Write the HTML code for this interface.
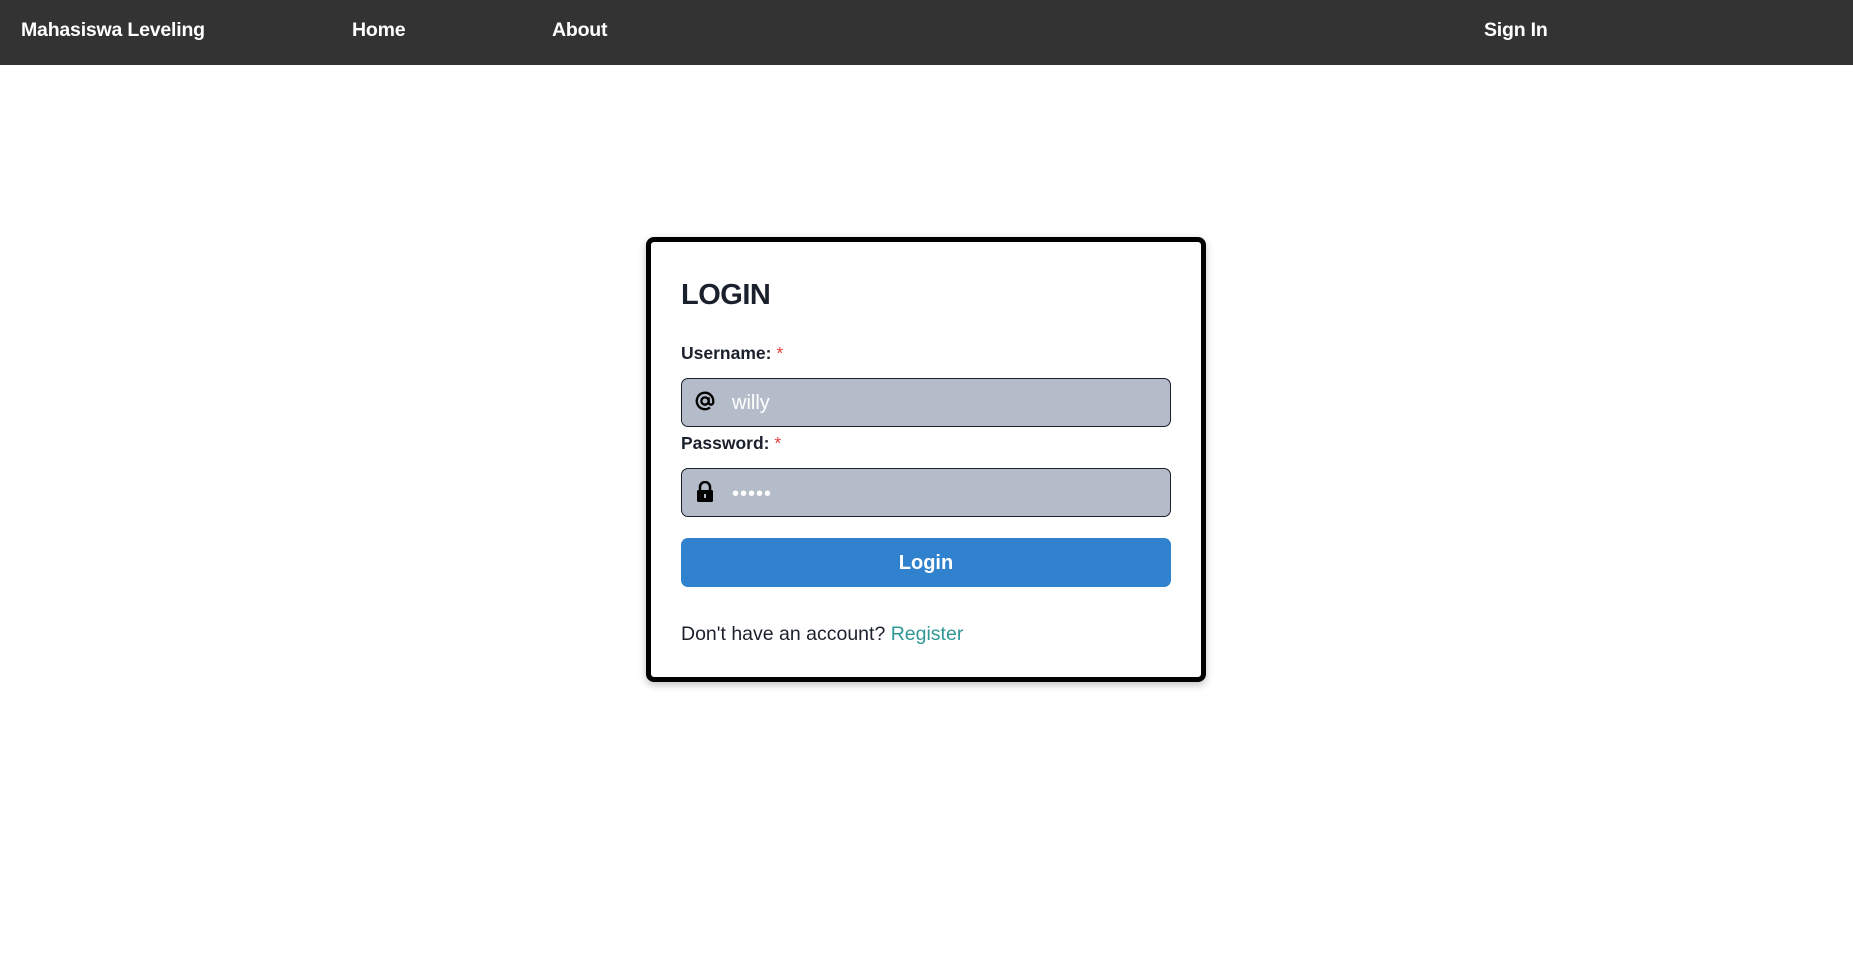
<!DOCTYPE html>
<html><head><meta charset="utf-8"><style>
*{box-sizing:border-box;margin:0;padding:0}
body{width:1853px;height:971px;background:#fff;font-family:"Liberation Sans",sans-serif;position:relative;overflow:hidden}
nav{position:absolute;left:0;top:0;width:1853px;height:65px;background:#333}
nav span{position:absolute;top:19px;color:#fff;font-weight:bold;font-size:19.5px;letter-spacing:-0.2px}
.card{position:absolute;left:646px;top:237px;width:560px;height:445px;border:5px solid #000;border-radius:8px;box-shadow:0 3px 8px rgba(0,0,0,.25)}
.t{position:absolute;left:681px;top:279px;font-size:29px;font-weight:bold;color:#1a202c;letter-spacing:-0.5px}
.lbl{position:absolute;left:681px;font-size:17.5px;font-weight:bold;color:#1a202c}
.lbl b{color:#e53e3e;font-weight:normal}
.inp{position:absolute;left:681px;width:490px;height:49px;background:#b5bcc9;border:1.5px solid #1a202c;border-radius:7px}
.inp .v{position:absolute;left:50px;top:13px;color:#fff;font-size:20px}
.btn{position:absolute;left:681px;top:538px;width:490px;height:49px;background:#3182ce;border-radius:7px;color:#fff;font-size:20px;font-weight:bold;text-align:center;line-height:51px}
.reg{position:absolute;left:681px;top:623px;font-size:19.5px;color:#1a202c}
.reg span{color:#319795}
</style></head><body>
<nav><span style="left:21px">Mahasiswa Leveling</span><span style="left:352px">Home</span><span style="left:552px">About</span><span style="left:1484px">Sign In</span></nav>
<div class="card"></div>
<div class="t">LOGIN</div>
<div class="lbl" style="top:343px">Username: <b>*</b></div>
<div class="inp" style="top:378px"><svg style="position:absolute;left:12px;top:11px" width="22" height="22" viewBox="0 0 24 24"><circle cx="12" cy="12" r="4" fill="none" stroke="#000" stroke-width="2.5"/><path d="M16 8v5.5a2.5 2.5 0 0 0 5 0V12a9 9 0 1 0-3.5 7.1" fill="none" stroke="#000" stroke-width="2.5"/></svg><span class="v">willy</span></div>
<div class="lbl" style="top:433px">Password: <b>*</b></div>
<div class="inp" style="top:468px"><svg style="position:absolute;left:14px;top:12px" width="18" height="22" viewBox="0 0 18 22"><path d="M4 10V6a5 5 0 0 1 10 0v4" fill="none" stroke="#000" stroke-width="2.5"/><rect x="1" y="9" width="16" height="12" rx="1.5" fill="#000"/><rect x="8" y="13" width="2" height="4" fill="#b5bcc9"/></svg><span class="v" style="top:14px;letter-spacing:1px">•••••</span></div>
<div class="btn">Login</div>
<div class="reg">Don't have an account? <span>Register</span></div>
</body></html>
